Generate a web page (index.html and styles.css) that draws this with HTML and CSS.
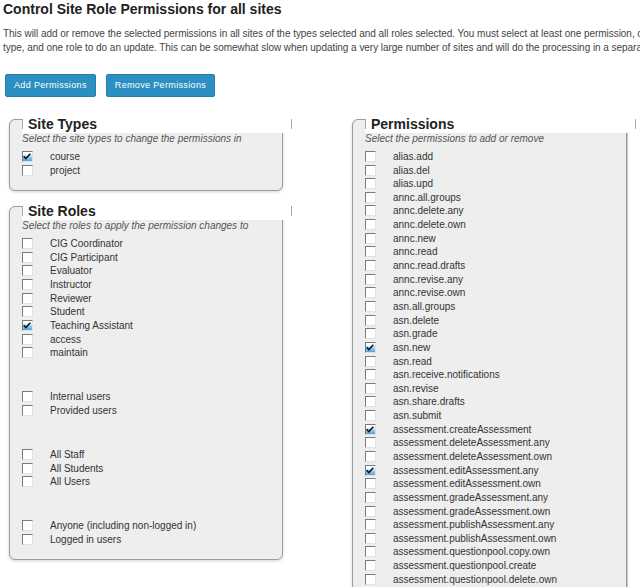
FILE: index.html
```html
<!DOCTYPE html>
<html lang="en">
<head>
<meta charset="utf-8">
<title>Control Site Role Permissions</title>
<link rel="stylesheet" href="styles.css">
</head>
<body>
<div class="page">
  <h1 class="title">Control Site Role Permissions for all sites</h1>
  <p class="intro">This will add or remove the selected permissions in all sites of the types selected and all roles selected. You must select at least one permission, one site type, and one role to do an update. This can be somewhat slow when updating a very large number of sites and will do the processing in a separate thread.</p>

  <div class="actions">
    <button class="btn" type="button">Add Permissions</button>
    <button class="btn" type="button">Remove Permissions</button>
  </div>

  <div class="columns">
    <div class="col col-left">
      <div class="panel">
        <div class="legend">Site Types</div>
        <div class="desc">Select the site types to change the permissions in</div>
        <div class="list">
          <div class="group">
            <label class="opt"><span class="cb checked"><svg viewBox="0 0 11 11" width="11" height="11"><path d="M1.8 5.2 L4.2 7.8 L9.2 2.4" fill="none" stroke="#111" stroke-width="1.7"/></svg></span>course</label>
            <label class="opt"><span class="cb"></span>project</label>
          </div>
        </div>
      </div>

      <div class="panel panel-roles">
        <div class="legend">Site Roles</div>
        <div class="desc">Select the roles to apply the permission changes to</div>
        <div class="list">
          <div class="group">
            <label class="opt"><span class="cb"></span>CIG Coordinator</label>
            <label class="opt"><span class="cb"></span>CIG Participant</label>
            <label class="opt"><span class="cb"></span>Evaluator</label>
            <label class="opt"><span class="cb"></span>Instructor</label>
            <label class="opt"><span class="cb"></span>Reviewer</label>
            <label class="opt"><span class="cb"></span>Student</label>
            <label class="opt"><span class="cb checked"><svg viewBox="0 0 11 11" width="11" height="11"><path d="M1.8 5.2 L4.2 7.8 L9.2 2.4" fill="none" stroke="#111" stroke-width="1.7"/></svg></span>Teaching Assistant</label>
            <label class="opt"><span class="cb"></span>access</label>
            <label class="opt"><span class="cb"></span>maintain</label>
          </div>
          <div class="group">
            <label class="opt"><span class="cb"></span>Internal users</label>
            <label class="opt"><span class="cb"></span>Provided users</label>
          </div>
          <div class="group">
            <label class="opt"><span class="cb"></span>All Staff</label>
            <label class="opt"><span class="cb"></span>All Students</label>
            <label class="opt"><span class="cb"></span>All Users</label>
          </div>
          <div class="group">
            <label class="opt"><span class="cb"></span>Anyone (including non-logged in)</label>
            <label class="opt"><span class="cb"></span>Logged in users</label>
          </div>
        </div>
      </div>
    </div>

    <div class="col col-right">
      <div class="panel panel-perms">
        <div class="legend">Permissions</div>
        <div class="desc">Select the permissions to add or remove</div>
        <div class="list">
          <div class="group">
            <label class="opt"><span class="cb"></span>alias.add</label>
            <label class="opt"><span class="cb"></span>alias.del</label>
            <label class="opt"><span class="cb"></span>alias.upd</label>
            <label class="opt"><span class="cb"></span>annc.all.groups</label>
            <label class="opt"><span class="cb"></span>annc.delete.any</label>
            <label class="opt"><span class="cb"></span>annc.delete.own</label>
            <label class="opt"><span class="cb"></span>annc.new</label>
            <label class="opt"><span class="cb"></span>annc.read</label>
            <label class="opt"><span class="cb"></span>annc.read.drafts</label>
            <label class="opt"><span class="cb"></span>annc.revise.any</label>
            <label class="opt"><span class="cb"></span>annc.revise.own</label>
            <label class="opt"><span class="cb"></span>asn.all.groups</label>
            <label class="opt"><span class="cb"></span>asn.delete</label>
            <label class="opt"><span class="cb"></span>asn.grade</label>
            <label class="opt"><span class="cb checked"><svg viewBox="0 0 11 11" width="11" height="11"><path d="M1.8 5.2 L4.2 7.8 L9.2 2.4" fill="none" stroke="#111" stroke-width="1.7"/></svg></span>asn.new</label>
            <label class="opt"><span class="cb"></span>asn.read</label>
            <label class="opt"><span class="cb"></span>asn.receive.notifications</label>
            <label class="opt"><span class="cb"></span>asn.revise</label>
            <label class="opt"><span class="cb"></span>asn.share.drafts</label>
            <label class="opt"><span class="cb"></span>asn.submit</label>
            <label class="opt"><span class="cb checked"><svg viewBox="0 0 11 11" width="11" height="11"><path d="M1.8 5.2 L4.2 7.8 L9.2 2.4" fill="none" stroke="#111" stroke-width="1.7"/></svg></span>assessment.createAssessment</label>
            <label class="opt"><span class="cb"></span>assessment.deleteAssessment.any</label>
            <label class="opt"><span class="cb"></span>assessment.deleteAssessment.own</label>
            <label class="opt"><span class="cb checked"><svg viewBox="0 0 11 11" width="11" height="11"><path d="M1.8 5.2 L4.2 7.8 L9.2 2.4" fill="none" stroke="#111" stroke-width="1.7"/></svg></span>assessment.editAssessment.any</label>
            <label class="opt"><span class="cb"></span>assessment.editAssessment.own</label>
            <label class="opt"><span class="cb"></span>assessment.gradeAssessment.any</label>
            <label class="opt"><span class="cb"></span>assessment.gradeAssessment.own</label>
            <label class="opt"><span class="cb"></span>assessment.publishAssessment.any</label>
            <label class="opt"><span class="cb"></span>assessment.publishAssessment.own</label>
            <label class="opt"><span class="cb"></span>assessment.questionpool.copy.own</label>
            <label class="opt"><span class="cb"></span>assessment.questionpool.create</label>
            <label class="opt"><span class="cb"></span>assessment.questionpool.delete.own</label>
          </div>
        </div>
      </div>
    </div>
  </div>
</div>
</body>
</html>
```

FILE: styles.css
```css
html, body {
  margin: 0;
  padding: 0;
  background: #fff;
  overflow: hidden;
}

body {
  font-family: "Liberation Sans", Arial, sans-serif;
  color: #333;
}

.page {
  padding: 0 0 0 3px;
  width: 760px;
}

.title {
  margin: 0;
  padding-top: 1px;
  font-size: 14px;
  line-height: 17px;
  font-weight: bold;
  color: #222;
}

.intro {
  margin: 9px 0 0;
  width: 690px;
  font-size: 10px;
  letter-spacing: -0.04px;
  line-height: 14.3px;
  color: #444;
}

.actions {
  display: flex;
  gap: 10px;
  margin: 18px 0 0 2px;
}

.btn {
  height: 23px;
  padding: 0 8px;
  border: 1px solid #247fac;
  border-radius: 2px;
  background: #2b8fc2;
  color: #fff;
  font-family: "Liberation Sans", Arial, sans-serif;
  font-size: 9px;
  letter-spacing: 0.35px;
  line-height: 21px;
}

.columns {
  display: flex;
  align-items: flex-start;
  gap: 69px;
  margin: 22px 0 0 6px;
}

.col {
  display: flex;
  flex-direction: column;
  gap: 15px;
}

.col-left {
  width: 274px;
}

.col-right {
  width: 275px;
}

.panel {
  border: 1px solid #9c9c9c;
  border-radius: 6px;
  background: #eee;
  padding: 0 12px 13px 12px;
  box-shadow: 0 1px 3px rgba(0, 0, 0, 0.18);
}

.panel-perms {
  box-shadow: 1px 0 0 #c8c8c8, 0 1px 3px rgba(0, 0, 0, 0.18);
}

.legend {
  position: relative;
  margin: -6px -22px 0 0;
  height: 19px;
  padding-left: 6px;
  background: #fff;
  font-size: 14px;
  line-height: 20px;
  font-weight: bold;
  color: #222;
}

.legend::before,
.legend::after {
  content: "";
  position: absolute;
  top: 5px;
  width: 1px;
  height: 10px;
  background: #a8a8a8;
}

.legend::before {
  left: 0;
}

.legend::after {
  right: 0;
}

.desc {
  font-size: 10px;
  line-height: 12px;
  font-style: italic;
  color: #555;
}

.list {
  margin-top: 5px;
}

.group + .group {
  margin-top: 30.45px;
}

.opt {
  display: flex;
  align-items: center;
  height: 13.65px;
  font-size: 10px;
  color: #333;
  white-space: nowrap;
}

.cb {
  flex: none;
  box-sizing: border-box;
  width: 11px;
  height: 11px;
  margin-right: 17px;
  border: 1px solid;
  border-color: #7a7a7a #e2e2e2 #e2e2e2 #7a7a7a;
  background: #fff;
  display: flex;
}

.cb svg {
  margin: -1px 0 0 -1px;
}

.cb.checked {
  background: linear-gradient(#ffffff 25%, #9fd0f2 55%, #4aa3e4);
}
```
